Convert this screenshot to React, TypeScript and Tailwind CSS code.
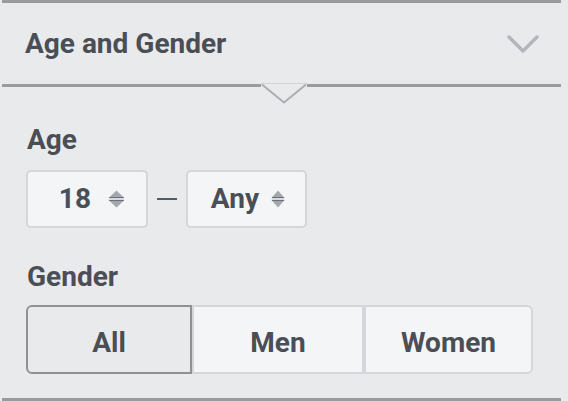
import React from 'react';

const Spinner = ({ w }: { w: number }) => (
  <svg width={w} height="18" viewBox="0 0 16 18" preserveAspectRatio="none">
    <polygon points="1,7.5 8,0.5 15,7.5" fill="#a3a7ae" />
    <polygon points="1,10.5 15,10.5 8,17.5" fill="#a3a7ae" />
    <rect x="1" y="7" width="14" height="1.2" fill="#6b707a" />
    <rect x="1" y="9.8" width="14" height="1.2" fill="#6b707a" />
  </svg>
);

const genders = [
  { label: 'All', width: 'w-[166px]', active: true, round: 'rounded-l-[6px]' },
  { label: 'Men', width: 'w-[172px]', active: false, round: '' },
  { label: 'Women', width: 'w-[169px]', active: false, round: 'rounded-r-[6px]' },
];

export default function App() {
  return (
    <div className="w-[568px] h-[401px] bg-[#e9eaec] font-['Roboto',sans-serif] text-[#4a4e55] overflow-hidden">
      <div className="ml-[2px] w-[559px]">
        <div className="h-[3px] bg-[#9a9b9f]" />

        {/* header */}
        <div className="h-[81px] flex items-center justify-between pl-[23px] pr-[22px]">
          <span className="text-[28px] leading-[32px] font-bold">Age and Gender</span>
          <svg width="32" height="20" viewBox="0 0 32 20">
            <polyline
              points="2,3 16,17 30,3"
              fill="none"
              stroke="#b3b6bb"
              strokeWidth="3.5"
              strokeLinecap="round"
              strokeLinejoin="round"
            />
          </svg>
        </div>

        <div className="relative h-[3px] bg-[#9a9b9f]">
          <svg
            className="absolute left-[259px] top-[-1px]"
            width="46"
            height="21"
            viewBox="0 0 46 21"
          >
            <polygon points="0,0 46,0 46,4 23,20 0,4" fill="#e9eaec" />
            <line x1="0" y1="0.5" x2="46" y2="0.5" stroke="#d2d3d6" strokeWidth="1" />
            <polyline points="1,1.5 23,19.5 45,1.5" fill="none" stroke="#abadb2" strokeWidth="2" />
          </svg>
        </div>

        {/* body */}
        <div className="pl-[24px]">
          <div className="mt-[37px] text-[28px] leading-[32px] font-bold pl-[1px]">Age</div>

          <div className="mt-[14px] flex items-center">
            <div className="w-[122px] h-[58px] flex items-center justify-end gap-[17px] pr-[21px] bg-[#f4f5f7] border-2 border-[#d4d6da] rounded-[5px]">
              <span className="text-[28px] leading-[32px] font-bold">18</span>
              <Spinner w={17} />
            </div>
            <div className="mx-[9px] w-[20px] h-[2px] bg-[#565a61]" />
            <div className="w-[121px] h-[58px] flex items-center justify-end gap-[12px] pr-[20px] bg-[#f4f5f7] border-2 border-[#d4d6da] rounded-[5px]">
              <span className="text-[28px] leading-[32px] font-bold">Any</span>
              <Spinner w={14} />
            </div>
          </div>

          <div className="mt-[33px] text-[28px] leading-[32px] font-bold pl-[1px]">Gender</div>

          <div className="mt-[12px] flex h-[69px]">
            {genders.map((g) => (
              <div
                key={g.label}
                className={`${g.width} ${g.round} flex items-center justify-center pt-[7px] border-2 text-[28px] leading-[32px] font-bold ${
                  g.active ? 'bg-[#e9eaec] border-[#8f9195]' : 'bg-[#f4f5f7] border-[#d4d6da]'
                }`}
              >
                {g.label}
              </div>
            ))}
          </div>
        </div>

        <div className="mt-[24px] h-[3px] bg-[#9a9b9f]" />
      </div>
    </div>
  );
}
